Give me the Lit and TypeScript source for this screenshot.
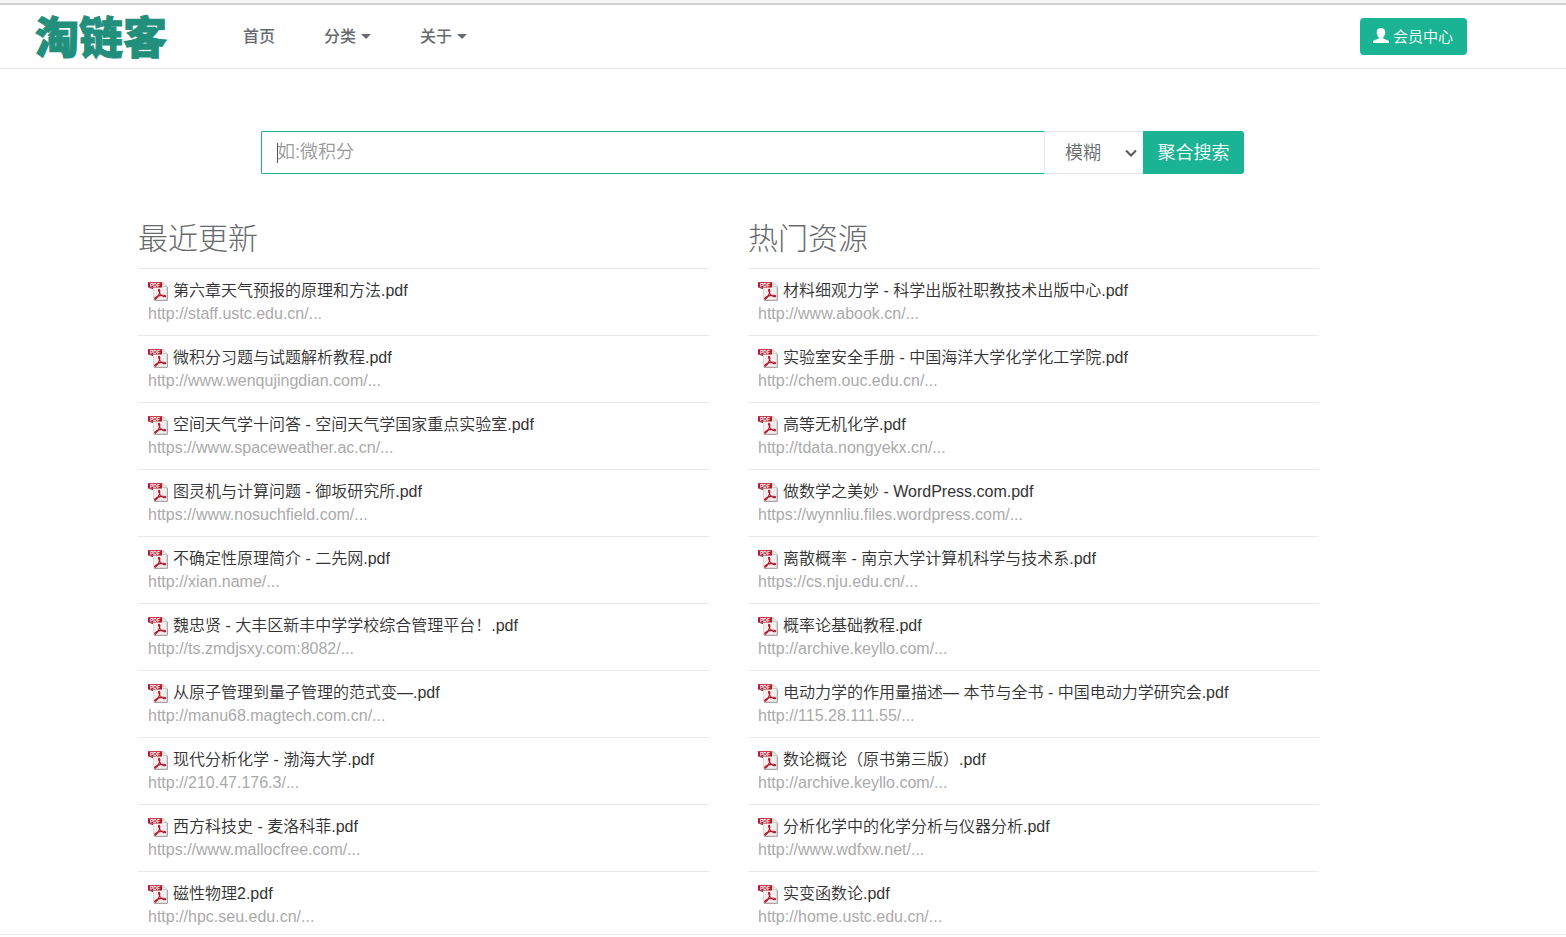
import { LitElement, html, css } from "lit";
import { customElement, property } from "lit/decorators.js";

interface Resource {
  title: string;
  url: string;
}

const recent: Resource[] = [
  { title: "第六章天气预报的原理和方法.pdf", url: "http://staff.ustc.edu.cn/..." },
  { title: "微积分习题与试题解析教程.pdf", url: "http://www.wenqujingdian.com/..." },
  { title: "空间天气学十问答 - 空间天气学国家重点实验室.pdf", url: "https://www.spaceweather.ac.cn/..." },
  { title: "图灵机与计算问题 - 御坂研究所.pdf", url: "https://www.nosuchfield.com/..." },
  { title: "不确定性原理简介 - 二先网.pdf", url: "http://xian.name/..." },
  { title: "魏忠贤 - 大丰区新丰中学学校综合管理平台！.pdf", url: "http://ts.zmdjsxy.com:8082/..." },
  { title: "从原子管理到量子管理的范式变—.pdf", url: "http://manu68.magtech.com.cn/..." },
  { title: "现代分析化学 - 渤海大学.pdf", url: "http://210.47.176.3/..." },
  { title: "西方科技史 - 麦洛科菲.pdf", url: "https://www.mallocfree.com/..." },
  { title: "磁性物理2.pdf", url: "http://hpc.seu.edu.cn/..." },
];

const popular: Resource[] = [
  { title: "材料细观力学 - 科学出版社职教技术出版中心.pdf", url: "http://www.abook.cn/..." },
  { title: "实验室安全手册 - 中国海洋大学化学化工学院.pdf", url: "http://chem.ouc.edu.cn/..." },
  { title: "高等无机化学.pdf", url: "http://tdata.nongyekx.cn/..." },
  { title: "做数学之美妙 - WordPress.com.pdf", url: "https://wynnliu.files.wordpress.com/..." },
  { title: "离散概率 - 南京大学计算机科学与技术系.pdf", url: "https://cs.nju.edu.cn/..." },
  { title: "概率论基础教程.pdf", url: "http://archive.keyllo.com/..." },
  { title: "电动力学的作用量描述— 本节与全书 - 中国电动力学研究会.pdf", url: "http://115.28.111.55/..." },
  { title: "数论概论（原书第三版）.pdf", url: "http://archive.keyllo.com/..." },
  { title: "分析化学中的化学分析与仪器分析.pdf", url: "http://www.wdfxw.net/..." },
  { title: "实变函数论.pdf", url: "http://home.ustc.edu.cn/..." },
];

@customElement("pdf-icon")
export class PdfIcon extends LitElement {
  static styles = css`
    :host {
      display: block;
      flex: none;
      width: 20px;
      height: 20px;
    }
    svg {
      display: block;
    }
    .tag {
      font: bold 5px "Liberation Sans", sans-serif;
      fill: #fff;
    }
  `;

  render() {
    return html`<svg width="20" height="20" viewBox="0 0 20 20" aria-hidden="true">
      <path d="M5.500 1.500h9.500l4 4v13.500h-13.500z" fill="#f1eeee" stroke="#dedada" />
      <path d="M19.400 6v13.400H6" fill="none" stroke="#9c9494" stroke-width="0.9" />
      <path d="M15 1.500v4h4z" fill="#fff" stroke="#b9b3b3" stroke-width="0.7" />
      <path d="M0 1h14v5.500H0z" fill="#b3152a" />
      <path d="M0 1h14v1H0z" fill="#c93c4d" />
      <path d="M0 6.500h5V8z" fill="#7d0e1c" />
      <path
        d="M11 8.200c1 0 1 2 .5 3.800-.6 2-2.300 5-3.700 5.900-.9.500-1.700-.1-.8-1 1.300-1.300 4.200-2.300 6.500-2.500 1.800-.2 4 0 4.200.7.2.8-1.600.9-2.800.2-1.900-1.100-3.800-3.600-4.200-5.400-.2-.9-.1-1.700.3-1.700z"
        fill="none"
        stroke="#b3152a"
        stroke-width="1.100"
      />
      <text class="tag" x="2" y="6">PDF</text>
    </svg>`;
  }
}

@customElement("resource-list")
export class ResourceList extends LitElement {
  @property() heading = "";
  @property({ attribute: false }) items: Resource[] = [];

  static styles = css`
    :host {
      display: block;
      min-width: 0;
    }
    .heading {
      margin: 0;
      padding-bottom: 13px;
      font-size: 30px;
      font-weight: 300;
      line-height: 32px;
      color: #676a6c;
    }
    .list {
      margin: 0;
      padding: 0;
      list-style: none;
    }
    .item {
      padding: 10px;
      border-top: 1px solid #e7eaec;
      font-size: 16px;
      line-height: 23px;
    }
    .item:last-child {
      padding-bottom: 6px;
    }
    .title {
      display: flex;
      align-items: center;
      gap: 5px;
      color: #333;
      font-weight: 350;
      text-decoration: none;
    }
    .url {
      color: #aaa;
    }
  `;

  render() {
    return html`
      <h2 class="heading">${this.heading}</h2>
      <ul class="list">
        ${this.items.map(
          (item) => html`<li class="item">
            <a class="title" href="#"><pdf-icon></pdf-icon><span>${item.title}</span></a>
            <div class="url">${item.url}</div>
          </li>`
        )}
      </ul>
    `;
  }
}

@customElement("app-root")
export class AppRoot extends LitElement {
  static styles = css`
    :host {
      display: block;
      background: #fff;
      color: #676a6c;
      font-family: "Liberation Sans", "Noto Sans CJK SC", sans-serif;
      font-size: 16px;
    }
    .strip {
      height: 3px;
      background: #f5f5f5;
      border-bottom: 2px solid #d0d0d0;
    }
    .header {
      display: flex;
      align-items: center;
      height: 63px;
      padding: 0 99px 0 35px;
      border-bottom: 1px solid #e7eaec;
    }
    .logo {
      padding-top: 4px;
      color: #218f7c;
      font-size: 44px;
      font-weight: 900;
      line-height: 59px;
      text-decoration: none;
      -webkit-text-stroke: 1px #218f7c;
    }
    .nav {
      display: flex;
      flex: 1;
      gap: 49px;
      margin-left: 76px;
    }
    .link {
      display: flex;
      align-items: center;
      gap: 5px;
      color: #676a6c;
      font-weight: 500;
      line-height: 24px;
      text-decoration: none;
    }
    .caret {
      border: 5px solid transparent;
      border-top-color: #676a6c;
      border-bottom: 0;
    }
    .member {
      display: flex;
      align-items: center;
      gap: 4px;
      height: 37px;
      padding: 0 14px 3px 13px;
      border: 0;
      border-radius: 4px;
      background: #1ab394;
      color: #fff;
      font-family: inherit;
      font-size: 15px;
      font-weight: 350;
    }
    .search {
      display: flex;
      height: 43px;
      padding: 62px 322px 49px 261px;
      font-size: 18px;
      font-weight: 350;
    }
    .query {
      flex: 1;
      min-width: 0;
      box-sizing: border-box;
      margin: 0;
      padding: 0 15px;
      border: 1px solid #1ab394;
      border-right: 0;
      border-radius: 2px 0 0 2px;
      outline: 0;
      background: linear-gradient(#555, #555) 15px 11px / 1px 20px no-repeat #fff;
      color: #676a6c;
      font: inherit;
    }
    .query::placeholder {
      color: #999;
    }
    .mode {
      display: grid;
      align-items: center;
      width: 99px;
    }
    .select {
      grid-area: 1 / 1;
      width: 100%;
      height: 43px;
      box-sizing: border-box;
      margin: 0;
      padding: 0 0 0 20px;
      border: 1px solid #e5e6e7;
      border-right: 0;
      border-radius: 0;
      appearance: none;
      background: #fff;
      color: #676a6c;
      font: inherit;
    }
    .chevron {
      grid-area: 1 / 1;
      justify-self: end;
      margin-right: 6px;
      pointer-events: none;
    }
    .submit {
      width: 101px;
      padding: 0 0 4px;
      border: 0;
      border-radius: 0 3px 3px 0;
      background: #1ab394;
      color: #fff;
      font: inherit;
    }
    .columns {
      display: grid;
      grid-template-columns: 1fr 1fr;
      gap: 39px;
      padding: 0 247px 0 138px;
    }
    .footer {
      height: 2px;
      border-top: 1px solid #e7eaec;
    }
  `;

  render() {
    return html`
      <div class="strip"></div>
      <header class="header">
        <a class="logo" href="#">淘链客</a>
        <nav class="nav">
          <a class="link" href="#">首页</a>
          <a class="link" href="#">分类<i class="caret"></i></a>
          <a class="link" href="#">关于<i class="caret"></i></a>
        </nav>
        <button class="member" type="button">
          <svg width="16" height="15" viewBox="0 0 16 15" fill="#fff" aria-hidden="true">
            <path
              d="M8 0c2.700 0 4.300 1.700 4.300 4.200 0 2.200-.9 4-2 5-.5.500-.3 1.200.4 1.500l3.900 1.500c.9.400 1.400.9 1.400 1.800v1H0v-1c0-.9.5-1.400 1.400-1.800l3.900-1.500c.7-.3.9-1 .4-1.500-1.100-1-2-2.800-2-5C3.700 1.700 5.300 0 8 0z"
            />
          </svg>
          会员中心
        </button>
      </header>
      <main>
        <form class="search" @submit=${(e: Event) => e.preventDefault()}>
          <input class="query" type="text" aria-label="搜索" placeholder="如:微积分" />
          <div class="mode">
            <select class="select" aria-label="匹配方式">
              <option>模糊</option>
            </select>
            <svg class="chevron" width="12" height="8" viewBox="0 0 12 8" aria-hidden="true">
              <path d="M1 1.500l5 5 5-5" fill="none" stroke="#55585a" stroke-width="2" />
            </svg>
          </div>
          <button class="submit" type="submit">聚合搜索</button>
        </form>
        <div class="columns">
          <resource-list heading="最近更新" .items=${recent}></resource-list>
          <resource-list heading="热门资源" .items=${popular}></resource-list>
        </div>
      </main>
      <footer class="footer"></footer>
    `;
  }
}
